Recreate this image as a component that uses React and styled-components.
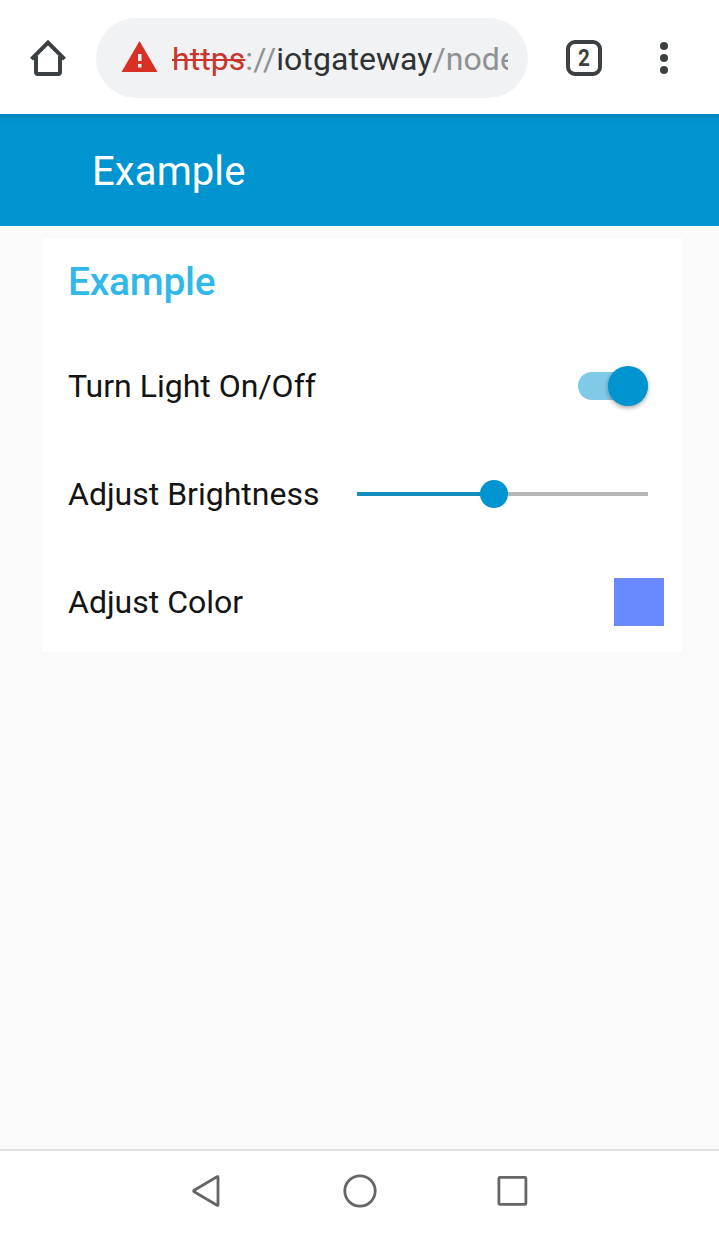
import React from "react";
import styled, { createGlobalStyle } from "styled-components";

const GlobalStyle = createGlobalStyle`
  * { box-sizing: border-box; }
  body { margin: 0; background: #fff; font-family: Roboto, sans-serif; }
`;

const Screen = styled.div`
  display: flex;
  flex-direction: column;
  width: 719px;
  height: 1234px;
  overflow: hidden;
`;

const BrowserBar = styled.header`
  display: flex;
  align-items: center;
  flex: none;
  height: 114px;
  padding: 2px 49px 0 30px;
  background: #fff;
`;

const HomeIcon = styled.svg`
  flex: none;
  margin-right: 30px;
`;

const AddressField = styled.div`
  display: flex;
  align-items: center;
  flex: none;
  width: 432px;
  height: 80px;
  padding: 0 20px 0 25px;
  border-radius: 40px;
  background: #f0f2f4;
`;

const WarningIcon = styled.svg`
  flex: none;
  margin: 0 14px 3px 0;
`;

const Url = styled.div`
  flex: 1;
  overflow: hidden;
  white-space: nowrap;
  font-size: 32px;
  letter-spacing: 0.06px;
  line-height: 44px;
  padding-top: 2px;
  color: #8f9193;
`;

const Scheme = styled.span`
  color: #c9362c;
  text-decoration: line-through;
  text-decoration-thickness: 2px;
`;

const Host = styled.span`
  color: #2f3133;
`;

const TabCount = styled.div`
  display: flex;
  align-items: center;
  justify-content: center;
  flex: none;
  width: 36px;
  height: 36px;
  margin: 0 52px 0 38px;
  border: 4px solid #3c4043;
  border-radius: 9px;
  color: #3c4043;
  font: 700 24px/28px Roboto, sans-serif;
`;

const Digit = styled.span`
  transform: scaleX(0.86);
`;

const MenuIcon = styled.svg`
  flex: none;
`;

const AppBar = styled.div`
  display: flex;
  align-items: center;
  flex: none;
  height: 112px;
  padding: 3px 0 0 92px;
  background: linear-gradient(#0784bd 0, #0290ca 5px, #0094d0 9px);
`;

const AppTitle = styled.h1`
  margin: 0;
  color: #fff;
  font-size: 40px;
  font-weight: 400;
  letter-spacing: 0.1px;
  line-height: 48px;
`;

const Page = styled.main`
  flex: 1;
  padding: 12px 37px 0 42px;
  background: #fafafa;
`;

const Card = styled.section`
  display: flex;
  flex-direction: column;
  gap: 8px;
  height: 414px;
  background: #fff;
`;

const CardTitle = styled.h2`
  height: 90px;
  margin: 0;
  padding: 20px 26px 0;
  color: #31b8ea;
  font-size: 39px;
  font-weight: 500;
  letter-spacing: -0.3px;
  line-height: 48px;
`;

const Row = styled.div`
  display: flex;
  align-items: center;
  justify-content: space-between;
  height: 100px;
  padding: 0 ${(p) => p.$inset}px 0 26px;
`;

const Label = styled.span`
  color: #141414;
  font-size: 32px;
  line-height: 40px;
`;

const Toggle = styled.div`
  display: flex;
  align-items: center;
  justify-content: flex-end;
  width: 70px;
  height: 28px;
  border-radius: 14px;
  background: #80c9e7;
`;

const ToggleKnob = styled.div`
  flex: none;
  width: 40px;
  height: 40px;
  border-radius: 50%;
  background: #0094d0;
  box-shadow: 0 2px 4px rgba(0, 0, 0, 0.35);
`;

const Slider = styled.div`
  display: flex;
  align-items: center;
  width: 291px;
`;

const SliderTrack = styled.div`
  flex: ${(p) => p.$size};
  height: 4px;
  background: ${(p) => (p.$filled ? "#168ebd" : "#b5b5b5")};
`;

const SliderKnob = styled.div`
  position: relative;
  flex: none;
  width: 28px;
  height: 28px;
  margin: 0 -1px;
  border-radius: 50%;
  background: #0094d0;
`;

const Swatch = styled.div`
  width: 50px;
  height: 48px;
  background: #6889ff;
  border: 1px solid #6f86ea;
`;

const NavBar = styled.nav`
  flex: none;
  display: flex;
  justify-content: center;
  gap: 119px;
  height: 85px;
  padding: 23px 0 0 1px;
  border-top: 2px solid #e2e2e2;
  background: #fff;
`;

const NavIcon = styled.svg`
  width: 34px;
  height: 34px;
  fill: none;
  stroke: #666;
  stroke-width: 2.8;
  stroke-linejoin: round;
`;

export default function App() {
  return (
    <Screen>
      <GlobalStyle />
      <BrowserBar>
        <HomeIcon width="36" height="38" viewBox="0 0 36 38" fill="none" stroke="#3c4043" strokeWidth="4">
          <path d="M1.5 20.2 18 3.6l16.5 16.6" />
          <path d="M6 17v16q0 2 2 2h20q2 0 2-2V17" />
        </HomeIcon>
        <AddressField>
          <WarningIcon width="37" height="32" viewBox="0 0 37 32">
            <path d="M18.5 0 36.5 31H.5Z" fill="#d93025" />
            <path d="M17 13h3.5v7H17zM17 23h3.5v3.5H17z" fill="#f0f2f4" />
          </WarningIcon>
          <Url>
            <Scheme>https</Scheme>://<Host>iotgateway</Host>/node
          </Url>
        </AddressField>
        <TabCount>
          <Digit>2</Digit>
        </TabCount>
        <MenuIcon width="20" height="34" viewBox="0 0 20 34" fill="#3c4043">
          <circle cx="10" cy="5" r="4" />
          <circle cx="10" cy="17" r="4" />
          <circle cx="10" cy="29" r="4" />
        </MenuIcon>
      </BrowserBar>
      <AppBar>
        <AppTitle>Example</AppTitle>
      </AppBar>
      <Page>
        <Card>
          <CardTitle>Example</CardTitle>
          <Row $inset={34}>
            <Label>Turn Light On/Off</Label>
            <Toggle>
              <ToggleKnob />
            </Toggle>
          </Row>
          <Row $inset={34}>
            <Label>Adjust Brightness</Label>
            <Slider>
              <SliderTrack $filled $size={124} />
              <SliderKnob />
              <SliderTrack $size={141} />
            </Slider>
          </Row>
          <Row $inset={18}>
            <Label>Adjust Color</Label>
            <Swatch />
          </Row>
        </Card>
      </Page>
      <NavBar>
        <NavIcon viewBox="0 0 34 34">
          <path d="M28 3.2v27.6q0 1-1 .5L4.2 17.8q-1-.8 0-1.6L27 2.7q1-.5 1 .5Z" />
        </NavIcon>
        <NavIcon viewBox="0 0 34 34">
          <circle cx="17" cy="17" r="15.2" />
        </NavIcon>
        <NavIcon viewBox="0 0 34 34">
          <rect x="2.9" y="3.4" width="27" height="27" rx="1" />
        </NavIcon>
      </NavBar>
    </Screen>
  );
}
